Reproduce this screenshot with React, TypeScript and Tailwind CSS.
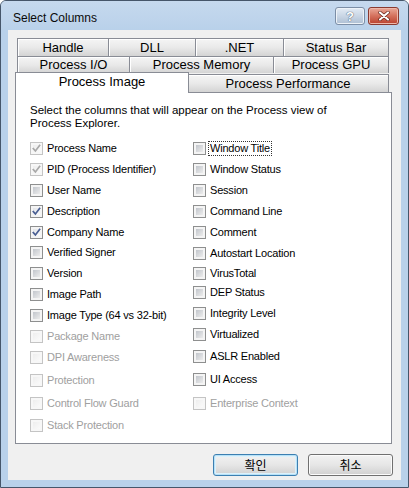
import React from 'react';

type State = 'on' | 'off' | 'dis' | 'dischecked';

type Item = { label: string; state: State; cls?: string; focus?: boolean };

const leftItems: Item[] = [
  { label: 'Process Name', state: 'dischecked' },
  { label: 'PID (Process Identifier)', state: 'dischecked' },
  { label: 'User Name', state: 'off' },
  { label: 'Description', state: 'on' },
  { label: 'Company Name', state: 'on' },
  { label: 'Verified Signer', state: 'off', cls: '-mt-px' },
  { label: 'Version', state: 'off' },
  { label: 'Image Path', state: 'off' },
  { label: 'Image Type (64 vs 32-bit)', state: 'off' },
  { label: 'Package Name', state: 'dis' },
  { label: 'DPI Awareness', state: 'dis' },
  { label: 'Protection', state: 'dis', cls: 'mt-[2px]' },
  { label: 'Control Flow Guard', state: 'dis', cls: 'mt-[2px]' },
  { label: 'Stack Protection', state: 'dis', cls: 'mt-px' },
];

const rightItems: Item[] = [
  { label: 'Window Title', state: 'off', focus: true },
  { label: 'Window Status', state: 'off' },
  { label: 'Session', state: 'off' },
  { label: 'Command Line', state: 'off' },
  { label: 'Comment', state: 'off' },
  { label: 'Autostart Location', state: 'off' },
  { label: 'VirusTotal', state: 'off', cls: '-mt-px' },
  { label: 'DEP Status', state: 'off', cls: '-mt-[2px]' },
  { label: 'Integrity Level', state: 'off' },
  { label: 'Virtualized', state: 'off' },
  { label: 'ASLR Enabled', state: 'off', cls: 'mt-px' },
  { label: 'UI Access', state: 'off', cls: 'mt-[2px]' },
  { label: 'Enterprise Context', state: 'dis', cls: 'mt-[3px]' },
];

function Check({ state }: { state: State }) {
  const disabled = state === 'dis' || state === 'dischecked';
  const checked = state === 'on' || state === 'dischecked';
  return (
    <div
      className={
        'relative w-[13px] h-[13px] shrink-0 border p-[2px] ' +
        (disabled ? 'border-[#c4c4c4] bg-[#f7f7f7]' : 'border-[#8e8f8f] bg-[#f4f4f4]')
      }
    >
      <div
        className={
          'w-full h-full bg-linear-to-br ' +
          (disabled
            ? 'from-[#eeeeee] to-[#fafafa]'
            : checked
              ? 'from-[#e2e4e8] to-[#fbfbfb]'
              : 'from-[#c2c6cc] to-[#ececec]')
        }
      />
      {checked && (
        <svg className="absolute left-0 top-0" width="11" height="11" viewBox="0 0 11 11">
          <path
            d="M2.3 5.6 L4.4 8 L8.6 2.4"
            fill="none"
            stroke={disabled ? '#a9a9a9' : '#4a5f93'}
            strokeWidth="1.7"
            strokeLinecap="square"
          />
        </svg>
      )}
    </div>
  );
}

function Row({ item }: { item: Item }) {
  const labelDisabled = item.state === 'dis';
  return (
    <div className={'h-[21px] flex items-center gap-[4px] ' + (item.cls ?? '')}>
      <Check state={item.state} />
      <span
        className={
          'leading-[13px] whitespace-nowrap ' +
          (labelDisabled ? 'text-[#a0a0a0]' : 'text-black') +
          (item.focus ? ' outline outline-1 outline-dotted outline-[#333] px-px -ml-px' : '')
        }
      >
        {item.label}
      </span>
    </div>
  );
}

function Tab({ label, w, last }: { label: string; w: string; last?: boolean }) {
  return (
    <div
      className={
        w +
        ' h-full flex items-center justify-center border-t border-l border-[#898c95] bg-linear-to-b from-[#f5f5f5] via-[#e9e9e9] to-[#d4d4d4] shadow-[inset_1px_1px_0_#ffffff] ' +
        (last ? 'border-r' : '')
      }
    >
      {label}
    </div>
  );
}

function WinButton({ label, primary }: { label: string; primary?: boolean }) {
  return (
    <div
      className={
        'w-[85px] h-[22px] rounded-[3px] border flex items-center justify-center text-[12px] text-black font-["Noto_Sans_CJK_KR",sans-serif] bg-linear-to-b from-[#f2f2f2] via-[#e6e6e6] to-[#d0d0d0] ' +
        (primary
          ? 'border-[#3c7fb1] shadow-[inset_0_0_0_1px_#b7e1f7,inset_0_0_0_2px_#dcf1fb]'
          : 'border-[#707070] shadow-[inset_0_0_0_1px_#fbfbfb]')
      }
    >
      {label}
    </div>
  );
}

export default function App() {
  return (
    <div className="w-[409px] h-[488px] bg-[#b9d1ea] border border-[#46566a] rounded-t-[6px] flex flex-col font-['Liberation_Sans',Arial,sans-serif] overflow-hidden">
      {/* title bar */}
      <div className="h-[29px] shrink-0 flex items-center pl-[12px] pr-[9px] bg-linear-to-b from-[#c6d9ee] to-[#b9d1ea]">
        <span className="text-[12px] text-[#0a0a0a] pt-[5px]">Select Columns</span>
        <div className="ml-auto flex gap-[3px] items-start pt-[1px]">
          <div className="w-[30px] h-[18px] rounded-[3px] border border-[#7c8ea6] bg-linear-to-b from-[#e4ecf5] via-[#c9d6e5] to-[#aebfd3] flex items-center justify-center shadow-[inset_0_0_0_1px_#eef3f8]">
            <span className="text-[13px] font-bold text-white leading-none [text-shadow:0_0_1px_#4a5a70,0_0_1px_#4a5a70]">?</span>
          </div>
          <div className="w-[31px] h-[18px] rounded-[3px] border border-[#8a3a30] bg-linear-to-b from-[#e9a898] via-[#d4705c] to-[#b9402e] flex items-center justify-center shadow-[inset_0_0_0_1px_#eeb8aa]">
            <svg width="12" height="10" viewBox="0 0 12 10">
              <path d="M2 1.5 L10 8.5 M10 1.5 L2 8.5" stroke="#5a1a12" strokeWidth="3.4" strokeLinecap="round" />
              <path d="M2 1.5 L10 8.5 M10 1.5 L2 8.5" stroke="#ffffff" strokeWidth="2.2" strokeLinecap="round" />
            </svg>
          </div>
        </div>
      </div>

      {/* client area */}
      <div className="mx-[7px] mb-[7px] flex-1 bg-[#f0f0f0] pt-[8px] pl-[7px] pr-[9px] flex flex-col">
        {/* tabs */}
        <div className="text-[13px] text-black">
          <div className="flex h-[18px] mx-[2px]">
            <Tab label="Handle" w="w-[91px]" />
            <Tab label="DLL" w="w-[87px]" />
            <Tab label=".NET" w="w-[88px]" />
            <Tab label="Status Bar" w="w-[106px]" last />
          </div>
          <div className="flex h-[17px] mx-[2px]">
            <Tab label="Process I/O" w="w-[112px]" />
            <Tab label="Process Memory" w="w-[144px]" />
            <Tab label="Process GPU" w="w-[116px]" last />
          </div>
          <div className="flex h-[19px] items-end mr-[3px]">
            <div className="relative z-10 w-[174px] h-[21px] -mb-px bg-white border-t border-l border-r border-[#898c95] flex items-center justify-center pb-[3px]">
              Process Image
            </div>
            <div className="flex-1 h-[18px] -ml-px flex items-center justify-center border-t border-r border-[#898c95] bg-linear-to-b from-[#f5f5f5] via-[#e9e9e9] to-[#d4d4d4] shadow-[inset_1px_1px_0_#ffffff]">
              Process Performance
            </div>
          </div>
        </div>

        {/* panel */}
        <div className="h-[352px] bg-white border border-[#898c95] pl-[14px] pt-[11px] text-[11px] tracking-[-0.2px]">
          <div className="leading-[13px] text-black text-[11.5px] tracking-normal">
            Select the columns that will appear on the Process view of
            <br />
            Process Explorer.
          </div>
          <div className="mt-[8px] flex">
            <div className="w-[163px] flex flex-col">
              {leftItems.map((it) => (
                <Row key={it.label} item={it} />
              ))}
            </div>
            <div className="flex flex-col">
              {rightItems.map((it) => (
                <Row key={it.label} item={it} />
              ))}
            </div>
          </div>
        </div>

        {/* buttons */}
        <div className="mt-[10px] flex justify-end gap-[10px] -mr-px">
          <WinButton label="확인" primary />
          <WinButton label="취소" />
        </div>
      </div>
    </div>
  );
}
